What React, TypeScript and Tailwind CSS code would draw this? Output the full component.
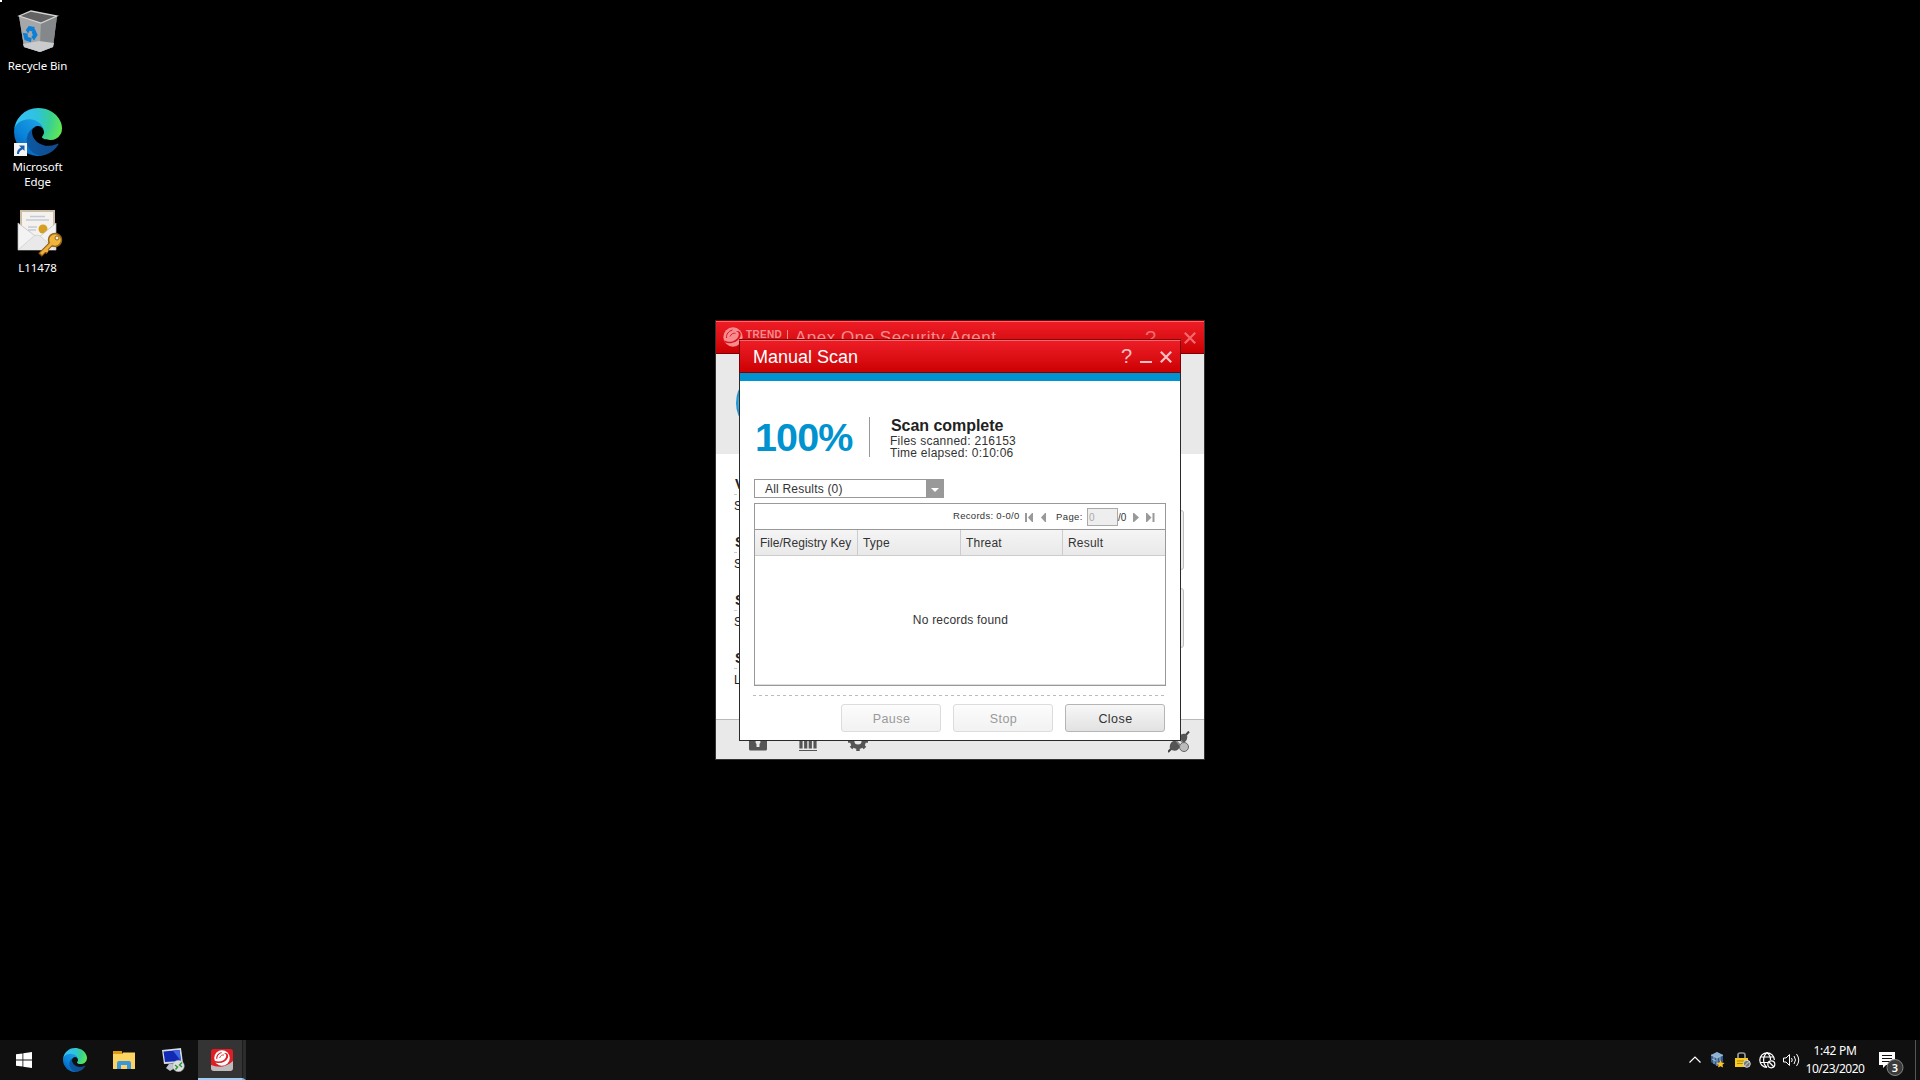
import React from "react";

const SANS = "font-['Liberation_Sans',Arial,sans-serif]";

function RecycleBin() {
  return (
    <svg width="42" height="46" viewBox="0 0 42 46" className="block">
      <path d="M2 7 L14 2 L40 7 L36 38 L23 43 L7 38 Z" fill="#8d8f91" />
      <path d="M2 7 L24 14 L23 43 L7 38 Z" fill="#a5a7a9" />
      <path d="M24 14 L40 7 L36 38 L23 43 Z" fill="#85888a" />
      <path d="M6 35 L22 32 L37 34 L36 38 L23 43 L7 38 Z" fill="#c9cbcc" />
      <path d="M2 7 L14 2 L40 7 L24 14 Z" fill="#626262" stroke="#d4d4d4" strokeWidth="1.3" />
      <path d="M9.500 21 L12 17.500 L17 18.500 L15.500 22 L12.500 21 L11 23.500 Z M17.500 20.500 L20 26 L17 30.500 L15 28 L16.500 26 L15.500 23.500 Z M6.500 24.500 L10 25 L10.500 28.500 L14 29.500 L13.500 32.500 L8 30.500 Z" fill="#0b7fd8" stroke="#0b7fd8" strokeWidth="1.1" />
    </svg>
  );
}

function Edge({ size, id }: { size: number; id: string }) {
  return (
    <svg width={size} height={size} viewBox="0 0 256 256" className="block">
      <defs>
        <linearGradient id={id + "a"} x1="63" y1="177" x2="241" y2="177" gradientUnits="userSpaceOnUse">
          <stop offset="0" stopColor="#0c59a4" />
          <stop offset="1" stopColor="#114a8b" />
        </linearGradient>
        <linearGradient id={id + "b"} x1="157" y1="100" x2="46" y2="222" gradientUnits="userSpaceOnUse">
          <stop offset="0" stopColor="#1b9de2" />
          <stop offset=".65" stopColor="#0883d9" />
          <stop offset="1" stopColor="#0668bf" />
        </linearGradient>
        <radialGradient id={id + "c"} cx="26" cy="47" r="245" gradientUnits="userSpaceOnUse">
          <stop offset="0" stopColor="#35c1f1" />
          <stop offset=".4" stopColor="#2fc2df" />
          <stop offset=".68" stopColor="#36cf96" />
          <stop offset="1" stopColor="#66eb4b" />
        </radialGradient>
      </defs>
      <path fill={`url(#${id}a)`} d="M231 190.500c-3.400 1.800-6.900 3.400-10.500 4.700a101.700 101.700 0 0 1-35.900 6.500c-47.300 0-88.500-32.500-88.500-74.300a31.500 31.500 0 0 1 16.400-27.300c-42.800 1.800-53.800 46.400-53.800 72.500 0 73.900 68.100 81.400 82.800 81.400 7.900 0 19.800-2.300 27-4.600l1.300-.4a128.300 128.300 0 0 0 66.600-52.800 4 4 0 0 0-5.400-5.700Z" />
      <path fill={`url(#${id}b)`} d="M105.700 241.400a79.200 79.200 0 0 1-22.700-21.300 80.700 80.700 0 0 1 29.500-120c3.200-1.500 8.500-4.200 15.600-4.100a32.400 32.400 0 0 1 25.700 13 31.900 31.900 0 0 1 6.300 18.700c0-.2 24.500-79.600-80-79.600-43.900 0-80 41.700-80 78.200a130.200 130.200 0 0 0 12.100 56 128 128 0 0 0 156.400 67 75.600 75.600 0 0 1-62.800-7.900Z" />
      <path fill={`url(#${id}c)`} d="M152.300 148.900c-.8 1-3.300 2.500-3.300 5.700 0 2.600 1.700 5.100 4.700 7.200 14.400 10 41.500 8.700 41.600 8.700a59.600 59.600 0 0 0 30.300-8.300 61.400 61.400 0 0 0 30.400-52.900c.3-22.400-8-37.300-11.300-43.900C223.500 23.900 177.700 0 128 0A128 128 0 0 0 0 126.200c.5-36.500 36.800-66 80-66 3.500 0 23.500.3 42 10.100 16.300 8.600 24.900 19 30.800 29.200 6.200 10.700 7.300 24.100 7.300 29.500 0 5.300-2.700 13.300-7.800 19.900Z" />
    </svg>
  );
}

function MailKey() {
  return (
    <svg width="46" height="48" viewBox="0 0 46 48" className="ml-[4px] block">
      <path d="M3 1 H38 V20 H3 Z" fill="#cbbca7" />
      <path d="M5 3 H36 V30 H5 Z" fill="#f5f2ed" />
      <path d="M13 7.500 H28 M9 11 H32 M11 18 H20 M11 21 H19" stroke="#c3c9dc" strokeWidth="1.3" />
      <circle cx="26" cy="20" r="4.500" fill="#d5a021" />
      <path d="M1 14 L21 29 L39 14 V41 H1 Z" fill="#f3f3f3" stroke="#bcbcbc" strokeWidth=".7" />
      <path d="M1 41 L17 27 Q20 25 23 27 L39 41" fill="#e9e9e9" stroke="#cfcfcf" strokeWidth=".8" />
      <path d="M35 34 L23 46 M28 41 L31 43" stroke="#8e5912" strokeWidth="5" />
      <circle cx="38" cy="31" r="6.500" fill="#f0b53b" stroke="#99651d" strokeWidth="1.500" />
      <path d="M35 34 L24 45 M28 41 L31 42" stroke="#eeb13c" strokeWidth="3" />
      <circle cx="40" cy="29" r="2" fill="#f9f0d8" stroke="#99651d" />
    </svg>
  );
}

function DesktopIcon({ label, children }: { label: React.ReactNode; children: React.ReactNode }) {
  return (
    <div className="flex h-[101px] w-[75px] flex-col items-center">
      <div className="flex h-[49px] items-end justify-center">{children}</div>
      <div className="mt-[3px] text-center font-['Noto_Sans',sans-serif] text-[11.500px] leading-[15px] tracking-[-0.1px] text-white">{label}</div>
    </div>
  );
}

function TrendBall({ size, fg, bg }: { size: number; fg: string; bg: string }) {
  return (
    <svg width={size} height={size} viewBox="0 0 20 20" className="block shrink-0">
      <circle cx="10" cy="10" r="9.700" fill={fg} />
      <path d="M.5 13 C6 16.500 13 14.500 15.300 9.500 C16.500 6.500 15.500 4.500 13 4.200 C17 3.500 18.700 6.500 17.200 10 C14.500 15.500 7.500 17.500 2 15.500 Z" fill={bg} />
      <path d="M3.600 11 C3 7.500 5.500 4 9.500 3" fill="none" stroke={bg} strokeWidth="1" />
      <path d="M7 9.500 C8 7 10.500 5.700 12.500 6.300" fill="none" stroke={bg} strokeWidth=".9" />
    </svg>
  );
}

function CloseGlyph({ color }: { color: string }) {
  return (
    <svg width="12" height="12" viewBox="0 0 12 12" className="block">
      <path d="M.8 .8 L11.200 11.200 M11.200 .8 L.8 11.200" stroke={color} strokeWidth="2.200" />
    </svg>
  );
}

const HEADER = "bg-linear-to-b from-[#ee1c25] to-[#cc0000]";

function AgentRow({ title, text }: { title: string; text: string }) {
  return (
    <div className="h-[58px] text-[#222]">
      <div className="h-[19px] pl-px text-[14px] leading-[18px] font-bold">{title}</div>
      <div className="h-px bg-[repeating-linear-gradient(90deg,#ccc_0_3px,transparent_3px_6px)]" />
      <div className="pt-[3px] text-[12px] leading-[16px]">{text}</div>
    </div>
  );
}

function AgentWindow() {
  return (
    <section className="absolute top-[320px] left-[715px] flex h-[440px] w-[490px] flex-col overflow-hidden border border-[#333] border-t-[#7c0006] bg-white">
      <header className={"-mx-px flex h-[33px] shrink-0 border-x border-b border-t border-[#7c0006] border-t-[#f4696e] " + HEADER}>
        <div className="pt-[5px] pl-[7px]"><TrendBall size={20} fg="#f58d90" bg="#e21119" /></div>
        <div className="mt-[6px] ml-[3px] w-[36px] text-[10px] leading-[13px] font-bold tracking-[0.35px] text-[#f58d90]">TREND</div>
        <div className="mt-[8px] ml-[5px] h-[16px] w-px bg-[#f58d90]" />
        <div className="mt-[6px] ml-[7px] text-[17px] leading-[20px] tracking-[0.5px] text-[#f58d90]">Apex One Security Agent</div>
        <div className="ml-auto flex pt-[4px] pr-[8px] text-[#f16a6e]">
          <span className="text-[20px] leading-[24px]">?</span>
          <div className="mt-[6px] ml-[28px]"><CloseGlyph color="#f16a6e" /></div>
        </div>
      </header>
      <div className="h-[100px] shrink-0 overflow-hidden bg-[#e9e9e9]">
        <div className="mt-[17px] ml-[20px] size-[64px] rounded-full border-2 border-[#1f97d2] bg-[#58abd8]" />
      </div>
      <div className="flex h-[265px] shrink-0 justify-between pl-[18px]">
        <div className="w-[200px] pt-[21px]">
          <AgentRow title="V" text="S" />
          <AgentRow title="S" text="S" />
          <AgentRow title="S" text="S" />
          <AgentRow title="S" text="L" />
        </div>
        <div className="mr-[20px] flex w-[60px] flex-col gap-[18px] pt-[56px]">
          <div className="h-[60px] rounded-[3px] border border-[#bdbdbd] bg-[#eee]" />
          <div className="h-[60px] rounded-[3px] border border-[#bdbdbd] bg-[#eee]" />
        </div>
      </div>
      <footer className="flex grow border-t border-[#b9b9b9] bg-[#e9e9e9] pl-[33px]">
        <svg width="18" height="20" viewBox="0 0 18 20" className="mt-[11px]">
          <rect y="4" width="18" height="15.500" rx="1.500" fill="#555" />
          <path d="M9 8.500 a2.500 2.500 0 0 1 1.500 4.500 V16 H7.500 V13 A2.500 2.500 0 0 1 9 8.500" fill="#e9e9e9" />
        </svg>
        <svg width="18" height="20" viewBox="0 0 18 20" className="mt-[11px] ml-[32px]">
          <path d="M2 5 V17.500 M6.700 5 V17.500 M11.300 5 V17.500 M16 5 V17.500" stroke="#555" strokeWidth="3.200" />
          <path d="M0 19.500 H18" stroke="#555" />
        </svg>
        <svg width="20" height="20" viewBox="0 0 20 20" className="mt-[11px] ml-[31px]">
          <circle cx="10" cy="10" r="5.800" fill="none" stroke="#555" strokeWidth="4.400" />
          <path d="M10 0 V4 M10 16 V20 M0 10 H4 M16 10 H20 M3 3 L5.500 5.500 M14.500 14.500 L17 17 M17 3 L14.500 5.500 M5.500 14.500 L3 17" stroke="#555" strokeWidth="3.500" />
        </svg>
        <svg width="22" height="22" viewBox="0 0 22 22" className="mt-[11px] mr-[14px] ml-auto">
          <path d="M0 21 L4 17 M17 5 L21 0.500" stroke="#444" strokeWidth="2" />
          <path d="M2 18 C1 13 4 9 8 10 L12 15 C11 20 6 21 2 18 Z M11 6 C13 2 17 2 19 4 C20 8 18 11 15 12 Z" fill="#555" />
          <path d="M6 7 L12 14 M9 5 L15 12" stroke="#888" strokeWidth="1.500" />
          <circle cx="16" cy="16" r="4.500" fill="#bbb" stroke="#666" />
        </svg>
      </footer>
    </section>
  );
}

function Pager({ d }: { d: string }) {
  return (
    <svg width="9" height="10" viewBox="0 0 9 10" className="block shrink-0">
      <path d={d} fill="#999" />
    </svg>
  );
}

function ScanButton({ label, disabled }: { label: string; disabled?: boolean }) {
  return (
    <button
      className={
        "h-[28px] w-[100px] rounded-[3px] border bg-linear-to-b pt-px pl-px text-center text-[12.500px] leading-[26px] tracking-[0.45px] " +
        (disabled ? "border-[#dcdcdc] from-[#fcfcfc] to-[#f2f2f2] text-[#999]" : "border-[#b5b5b5] from-[#f7f7f7] to-[#e2e2e2] text-[#333]")
      }
    >
      {label}
    </button>
  );
}

function ScanWindow() {
  return (
    <section className="absolute top-[339px] left-[739px] flex h-[402px] w-[442px] flex-col border border-[#2b2b2b] border-t-[#7c0006] bg-white">
      <header className={"-mx-px flex h-[33px] shrink-0 border-x border-t border-b border-[#7c0006] border-t-[#f4696e] pl-[13px] text-white " + HEADER}>
        <h1 className="mt-[5px] text-[18px] leading-[22px]">Manual Scan</h1>
        <div className="ml-auto flex pt-[3px] pr-[8px] text-[#fbc0c2]">
          <span className="text-[20px] leading-[25px]">?</span>
          <div className="mt-[17px] ml-[8px] h-[2px] w-[12px] bg-[#fbc0c2]" />
          <div className="mt-[7px] ml-[8px]"><CloseGlyph color="#fbc0c2" /></div>
        </div>
      </header>
      <div className="h-[8px] shrink-0 bg-[#0093d0]" />
      <div className="flex flex-col px-[14px]">
        <div className="mt-[36px] flex h-[40px]">
          <div className="-mt-px w-[115px] pl-px text-[39.500px] leading-[42px] font-bold tracking-[-0.900px] text-[#0093d0]">100%</div>
          <div className="h-[40px] w-px bg-[#999]" />
          <div className="pl-[20px] text-[#333]">
            <div className="h-[18px] pl-px text-[16px] leading-[17px] font-bold tracking-[-0.05px] text-[#222]">Scan complete</div>
            <div className="text-[12px] leading-[12px] tracking-[0.25px]">Files scanned: 216153</div>
            <div className="text-[12px] leading-[12px] tracking-[0.25px]">Time elapsed: 0:10:06</div>
          </div>
        </div>
        <div className="mt-[22px] flex h-[19px] w-[190px] border border-[#999] text-[#333]">
          <div className="grow pl-[10px] text-[12px] leading-[19px] tracking-[0.2px]">All Results (0)</div>
          <div className="-my-px -mr-px flex w-[18px] justify-center bg-[#999] pt-[9px]">
            <svg width="8" height="4" viewBox="0 0 8 4"><path d="M0 0 H8 L4 4 Z" fill="#fff" /></svg>
          </div>
        </div>
        <div className="mt-[5px] h-[183px] w-[412px] border border-[#999] text-[#333]">
          <div className="flex h-[26px] items-center border-b border-[#999] pl-[198px] text-[10px]">
            <span className="w-[72px] text-[9.500px] tracking-[0.3px] whitespace-nowrap">Records: 0-0/0</span>
            <Pager d="M0 1 H2 V10 H0 Z M8 1 V10 H7 L3 5.500 L7 1 Z" />
            <div className="ml-[6px]"><Pager d="M6 1 V10 H5 L1 5.500 L5 1 Z" /></div>
            <span className="ml-[7px] w-[31px] pt-px text-[9.500px] tracking-[0.4px]">Page:</span>
            <span className="h-[18px] w-[31px] border border-[#aaa] bg-[#eee] pl-px leading-[18px] text-[#aaa]">0</span>
            <span className="w-[15px] pt-px">/0</span>
            <Pager d="M0 1 V10 H1 L6 5.500 L1 1 Z" />
            <div className="ml-[4px]"><Pager d="M0 1 V10 H1 L5.500 5.500 L1 1 Z M6.500 1 H8.500 V10 H6.500 Z" /></div>
          </div>
          <div className="grid h-[26px] grid-cols-[103px_103px_102px_102px] border-b border-[#ccc] bg-linear-to-b from-[#f5f5f5] to-[#e9e9e9] text-[12px] leading-[27px] tracking-[0.2px]">
            <div className="h-[25px] border-r border-[#ccc] pl-[5px] tracking-[0.03px] whitespace-nowrap">File/Registry Key</div>
            <div className="h-[25px] border-r border-[#ccc] pl-[5px]">Type</div>
            <div className="h-[25px] border-r border-[#ccc] pl-[5px]">Threat</div>
            <div className="h-[25px] pl-[5px]">Result</div>
          </div>
          <div className="h-[129px] border-b border-[#ddd] pt-[56px] pl-px text-center text-[12px] leading-[16px] tracking-[0.2px]">No records found</div>
        </div>
        <div className="mt-[9px] -ml-px h-px w-[412px] bg-[repeating-linear-gradient(90deg,#bbb_0_3px,transparent_3px_6px)]" />
        <div className="mt-[8px] flex justify-end gap-[12px] pr-px">
          <ScanButton label="Pause" disabled />
          <ScanButton label="Stop" disabled />
          <ScanButton label="Close" />
        </div>
      </div>
    </section>
  );
}

function TaskIcon({ children, active }: { children: React.ReactNode; active?: boolean }) {
  return (
    <div className={"flex h-[40px] items-center justify-center " + (active ? "w-[44px] border-b-2 border-[#9fcdf3] bg-[#343434]" : "w-[49px] pr-[2px]")}>
      {children}
    </div>
  );
}

function Taskbar() {
  return (
    <footer className="flex h-[40px] bg-[#101010] font-['Noto_Sans',sans-serif] text-white">
      <TaskIcon>
        <svg width="16" height="16" viewBox="0 0 16 16"><path d="M0 2.300 L6.500 1.400 V7.600 H0 Z M7.300 1.300 L16 0 V7.600 H7.300 Z M0 8.400 H6.500 V14.600 L0 13.700 Z M7.300 8.400 H16 V16 L7.300 14.700 Z" fill="#fff" /></svg>
      </TaskIcon>
      <div className="ml-[2px]"><TaskIcon><Edge size={24} id="t" /></TaskIcon></div>
      <TaskIcon>
        <svg width="22" height="18" viewBox="0 0 22 18">
          <path d="M0 0 H9 V3 H0 Z" fill="#e09a10" />
          <path d="M0 3 H9 L10 1.500 H22 V18 H0 Z" fill="#fcd462" />
          <path d="M4 18 V12 Q4 10 6 10 H16 Q18 10 18 12 V18 H14 V14 H8 V18 Z" fill="#3a96dd" />
        </svg>
      </TaskIcon>
      <TaskIcon>
        <svg width="24" height="24" viewBox="0 0 24 24">
          <path d="M1 2 L20 0 L22 15 L3 16 Z" fill="#d5dbe3" />
          <path d="M2.500 3.500 L18.500 2 L20 13 L4 14 Z" fill="#1229b5" />
          <path d="M12 2.700 L18.500 2 L20 13 Z" fill="#3e66e0" />
          <path d="M8 16 L14 16 V20 L9 23 L5 20 Z" fill="#bcc4ce" />
          <circle cx="17.500" cy="18" r="5.800" fill="#dedede" stroke="#aaa" strokeWidth=".5" />
          <path d="M14 17 L16.500 19 L14.500 21.500 M21 14.500 L18.500 17 L21 19" fill="none" stroke="#2c9a3b" strokeWidth="1.500" />
        </svg>
      </TaskIcon>
      <TaskIcon active>
        <svg width="22" height="22" viewBox="0 0 22 22" className="mt-px ml-1">
          <rect width="22" height="22" rx="3" fill="#e01d24" />
          <path d="M0 16 Q12 21 22 12 V19 Q22 22 19 22 H3 Q0 22 0 19 Z" fill="#bcbcbc" />
          <svg x="3" y="1" width="16" height="16" viewBox="0 0 20 20">
            <circle cx="10" cy="10" r="9.700" fill="#fff" />
            <path d="M.5 13 C6 16 12.500 14 14.800 9.500 C16 6.500 15 4.500 12.500 4 C17 3.300 18.700 6.500 17.200 10 C14.500 15.500 7.500 17.500 2 15.500 Z" fill="#e01d24" />
            <path d="M3.600 11 C3 7.500 5.500 4 9.500 3" fill="none" stroke="#e01d24" strokeWidth="1.300" />
            <path d="M7 10 C8 7 10.500 5.700 12.500 6.300" fill="none" stroke="#e01d24" strokeWidth="1.100" />
          </svg>
        </svg>
      </TaskIcon>
      <div className="h-[40px] w-[4px] border-r-3 border-b-2 border-r-[#2c2c2c] border-b-[#86acd0] bg-[#1c1c1c]" />
      <div className="ml-auto flex">
        <svg width="12" height="7" viewBox="0 0 12 7" className="mt-[16px] mr-[10px]"><path d="M.5 6.500 L6 1 L11.500 6.500" fill="none" stroke="#fff" strokeWidth="1.200" /></svg>
        <svg width="14" height="16" viewBox="0 0 14 16" className="mt-[12px] mr-[10px]">
          <path d="M0 3 L6 0 L12 3 V10 L6 14 L0 10 Z" fill="#315a8c" />
          <path d="M0 3 L6 0 L12 3 L6 6 Z" fill="#8fb0d0" />
          <path d="M6 6 V14 M0 3 L6 6 L12 3 M1 7 L5 9 M3 5 V12 M9 5 V9" fill="none" stroke="#b5cbe0" strokeWidth=".8" />
          <path d="M9.500 8 L10.500 10.500 L13.500 11 L11.500 12.800 L12 15.500 L9.500 14.300 L7 15.500 L7.500 12.800 L5.500 11 L8.500 10.500 Z" fill="#fbc32a" />
        </svg>
        <svg width="16" height="16" viewBox="0 0 16 16" className="mt-[12px] mr-[8px]">
          <path d="M3 7 V3 Q3 1 5 1 H8 Q10 1 10 3 V7" fill="none" stroke="#999" strokeWidth="1.700" />
          <rect y="6" width="13" height="9" fill="#f8cb18" />
          <path d="M2 9 H9 M2 11.500 H8" stroke="#aa8410" />
          <circle cx="11.800" cy="11.800" r="3.500" fill="#777" stroke="#ddd" /><path d="M9.500 14 L14 9.500" stroke="#ddd" />
        </svg>
        <svg width="17" height="17" viewBox="0 0 17 17" className="mt-[12px] mr-[7px]" fill="none" stroke="#fff" strokeWidth="1.200">
          <path d="M15.400 8 A7.300 7.300 0 1 0 8 15.400 M8 .7 C3.500 4 3.500 12 8 15.400 M8 .7 Q11.500 3 11.500 8 M1.500 5 H14.500 M1.500 10.500 H9" />
          <circle cx="12.300" cy="12.300" r="3.500" /><path d="M10 10 L15 15" />
        </svg>
        <svg width="17" height="14" viewBox="0 0 17 14" className="mt-[13px] mr-[5px]" fill="none" stroke="#fff">
          <path d="M.5 5 H3 L6.500 1.500 V12.500 L3 9 H.5 Z M8.500 5 Q10 7 8.500 9 M11 3 Q14 7 11 11 M13.500 1 Q18 7 13.500 13" />
        </svg>
        <div className="w-[60px] pt-[2px] text-center text-[12px] leading-[18px] tracking-[-0.5px] whitespace-nowrap">
          <div className="tracking-[-0.3px]">1:42 PM</div>
          <div>10/23/2020</div>
        </div>
        <svg width="25" height="25" viewBox="0 0 25 25" className="mt-[12px] ml-[14px] font-['Noto_Sans',sans-serif]">
          <path d="M0 0 H16 V13 H7 L4 16 V13 H0 Z" fill="#fff" />
          <path d="M3 3.500 H13 M3 6.500 H13 M3 9.500 H11" stroke="#111" />
          <circle cx="16" cy="15.500" r="8" fill="#3b3b3b" stroke="#858585" />
          <text x="16" y="19.500" textAnchor="middle" fill="#fff" fontSize="11" fontWeight="600">3</text>
        </svg>
        <div className="ml-[11px] h-[40px] w-[5px] border-l border-[#555]" />
      </div>
    </footer>
  );
}

export default function App() {
  return (
    <div className={"relative flex h-[1080px] w-[1920px] flex-col overflow-hidden bg-black " + SANS}>
      <div className="absolute top-0 left-0 h-[2px] w-[2px] bg-white" />
      <main className="grow pt-[6px]">
        <DesktopIcon label="Recycle Bin"><RecycleBin /></DesktopIcon>
        <DesktopIcon label={<>Microsoft<br />Edge</>}>
          <div className="relative">
            <Edge size={48} id="d" />
            <svg width="13" height="13" viewBox="0 0 13 13" className="absolute bottom-0 left-0">
              <rect width="13" height="13" fill="#f4f4f4" />
              <path d="M5 2.500 H10.500 V8 L8.800 6.300 Q5 8 5 11 H3 Q2.500 6.500 7 4.500 Z" fill="#1a5fb0" />
            </svg>
          </div>
        </DesktopIcon>
        <DesktopIcon label="L11478"><MailKey /></DesktopIcon>
      </main>
      <AgentWindow />
      <ScanWindow />
      <Taskbar />
    </div>
  );
}
